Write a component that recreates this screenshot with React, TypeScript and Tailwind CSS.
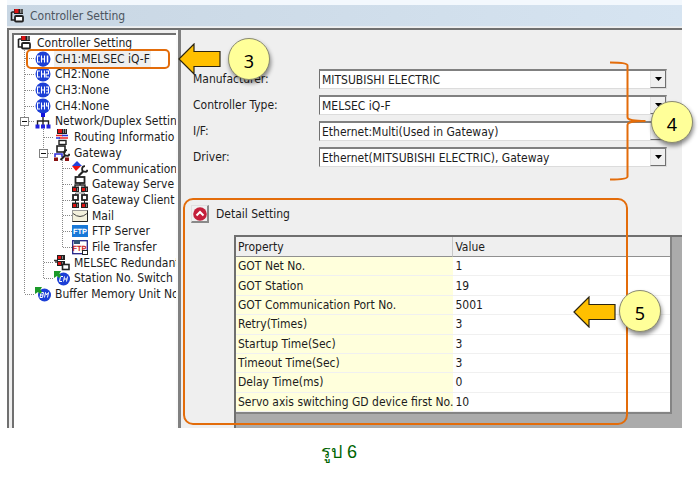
import React from 'react';

type IconKind =
  | 'root'
  | 'channel'
  | 'network'
  | 'routing'
  | 'gateway'
  | 'comm'
  | 'server'
  | 'client'
  | 'mail'
  | 'ftp'
  | 'file'
  | 'redundant'
  | 'badge';

interface TreeNode {
  label: string;
  icon: IconKind;
  depth: 0 | 1 | 2 | 3;
  mark?: string;
  selected?: boolean;
}

const nodes: TreeNode[] = [
  { label: 'Controller Setting', icon: 'root', depth: 0 },
  { label: 'CH1:MELSEC iQ-F', icon: 'channel', depth: 1, mark: 'CH1', selected: true },
  { label: 'CH2:None', icon: 'channel', depth: 1, mark: 'CH2' },
  { label: 'CH3:None', icon: 'channel', depth: 1, mark: 'CH3' },
  { label: 'CH4:None', icon: 'channel', depth: 1, mark: 'CH4' },
  { label: 'Network/Duplex Settin', icon: 'network', depth: 1 },
  { label: 'Routing Informatio', icon: 'routing', depth: 2 },
  { label: 'Gateway', icon: 'gateway', depth: 2 },
  { label: 'Communication', icon: 'comm', depth: 3 },
  { label: 'Gateway Serve', icon: 'server', depth: 3 },
  { label: 'Gateway Client', icon: 'client', depth: 3 },
  { label: 'Mail', icon: 'mail', depth: 3 },
  { label: 'FTP Server', icon: 'ftp', depth: 3 },
  { label: 'File Transfer', icon: 'file', depth: 3 },
  { label: 'MELSEC Redundant', icon: 'redundant', depth: 2 },
  { label: 'Station No. Switch', icon: 'badge', depth: 2, mark: 'CH' },
  { label: 'Buffer Memory Unit No', icon: 'badge', depth: 1, mark: 'BM' },
];

const fields = [
  { id: 'manufacturer', label: 'Manufacturer:', value: 'MITSUBISHI ELECTRIC' },
  { id: 'controller-type', label: 'Controller Type:', value: 'MELSEC iQ-F' },
  { id: 'interface', label: 'I/F:', value: 'Ethernet:Multi(Used in Gateway)' },
  { id: 'driver', label: 'Driver:', value: 'Ethernet(MITSUBISHI ELECTRIC), Gateway' },
];

const properties = [
  ['GOT Net No.', '1'],
  ['GOT Station', '19'],
  ['GOT Communication Port No.', '5001'],
  ['Retry(Times)', '3'],
  ['Startup Time(Sec)', '3'],
  ['Timeout Time(Sec)', '3'],
  ['Delay Time(ms)', '0'],
  ['Servo axis switching GD device first No.', '10'],
];

const indent = {
  0: 'pl-[3px]',
  1: 'pl-[21px]',
  2: 'pl-[40px]',
  3: 'pl-[58px]',
};

const Wrench = () => (
  <g fill="none" stroke="#222">
    <path d="M6.500 15L11 10.500" strokeWidth="2.200" />
    <path d="M13 5.200a2.800 2.800 0 1 0 2.600 3.600" strokeWidth="1.800" />
  </g>
);

const NodeIcon: React.FC<{ kind: IconKind; mark?: string }> = ({ kind, mark }) => (
  <svg viewBox="0 0 16 16" className="size-4 shrink-0" aria-hidden="true">
    {kind === 'root' && (
      <>
        <path d="M1.500 4v8h4M1.500 4h3" fill="none" stroke="#222" strokeWidth="1.600" />
        <rect x="4" y="1" width="9" height="5" fill="#222" />
        <rect x="4.500" y="1" width="4" height="4" fill="#d11" />
        <path d="M10.500 1v4M12 1v4" stroke="#888" />
        <rect x="5" y="8" width="8" height="5.500" rx="1" fill="#fff" stroke="#222" strokeWidth="1.800" />
      </>
    )}
    {kind === 'channel' && (
      <>
        <circle cx="8" cy="8" r="7.500" fill="#1c3fd6" />
        <g fill="none" stroke="#fff" strokeWidth="1.100">
          <path d="M5 5H2.500v6H5M6.500 4.500v7M9.500 4.500v7M6.500 8h3" />
          {mark === 'CH1' && <path d="M12.500 4.500v7" strokeWidth="1.500" />}
          {mark === 'CH2' && <path d="M11 5h2.500v3H11v3h3" />}
          {mark === 'CH3' && <path d="M11 5h2.500v6H11M11 8h2.500" />}
          {mark === 'CH4' && <path d="M11.500 4.500V8h2M13.500 4.500v7" />}
        </g>
      </>
    )}
    {kind === 'network' && (
      <>
        <path d="M8 4v8M2.500 12V8h11v4" fill="none" stroke="#222" strokeWidth="1.400" />
        <rect x="6" y="0" width="4" height="4" fill="#11d" />
        <path d="M.500 11.500h4v4h-4zM6 11.500h4v4H6zM11.500 11.500h4v4h-4z" fill="#22d" />
      </>
    )}
    {kind === 'routing' && (
      <>
        <rect x="3" y="0" width="10" height="5" fill="#222" />
        <rect x="4" y="0" width="4" height="4" fill="#d11" />
        <path d="M9.500 0v4M11.500 0v4" stroke="#888" />
        <path d="M2 6.500h7M5 9h9" stroke="#e22" strokeWidth="1.600" />
        <path d="M8 6.500h6M2 9h4" stroke="#23d" strokeWidth="1.600" />
        <rect x="5" y="11.500" width="7" height="4" fill="#fff" stroke="#222" strokeWidth="1.400" />
      </>
    )}
    {kind === 'gateway' && (
      <>
        <rect x="3" y="1" width="8" height="6" fill="#fff" stroke="#222" strokeWidth="1.600" />
        <path d="M1 12V9h7v3" fill="none" stroke="#33d" strokeWidth="1.600" />
        <path d="M0 12.500h4V16H0zM11 12.500h4V16h-4z" fill="#811" />
        <Wrench />
      </>
    )}
    {kind === 'comm' && (
      <>
        <path d="M5 0l5 5H0z" fill="#24d" />
        <path d="M0 5h9L4 10z" fill="#e11" />
        <Wrench />
      </>
    )}
    {kind === 'server' && (
      <>
        <rect x="3.500" y="1" width="9" height="6" fill="#fff" stroke="#222" strokeWidth="1.800" />
        <path d="M8 7v2M3 11V9h10v2" fill="none" stroke="#222" strokeWidth="1.400" />
        <path d="M0 10.500h7V16H0zM9 10.500h7V16H9z" fill="#222" />
        <path d="M1 12h3v3H1zM10 12h3v3h-3z" fill="#d11" />
        <path d="M5.500 12v3M14.500 12v3" stroke="#888" />
      </>
    )}
    {kind === 'client' && (
      <>
        <path d="M3.500 5V1h9v4" fill="none" stroke="#777" />
        <rect x="1" y="3" width="5" height="5" fill="#fff" stroke="#222" strokeWidth="1.800" />
        <rect x="10" y="3" width="5" height="5" fill="#fff" stroke="#222" strokeWidth="1.800" />
        <path d="M3.500 8v3M12.500 8v3" stroke="#222" />
        <path d="M0 10.500h7V16H0zM9 10.500h7V16H9z" fill="#222" />
        <path d="M1 12h3v3H1zM10 12h3v3h-3z" fill="#d11" />
        <path d="M5.500 12v3M14.500 12v3" stroke="#888" />
      </>
    )}
    {kind === 'mail' && (
      <>
        <rect x="0.500" y="2.500" width="15" height="11" fill="#f3f0dc" stroke="#999" />
        <path d="M15.500 2.500v11H.500" fill="none" stroke="#222" />
        <path d="M1 5.500q7 6 14 0" fill="none" stroke="#444" />
      </>
    )}
    {kind === 'ftp' && (
      <>
        <rect y="2" width="16" height="12" fill="#1878d8" />
        <text x="8" y="11" textAnchor="middle" textRendering="geometricPrecision" fontSize="7.500" fontWeight="700" fill="#fff" fontFamily="Liberation Sans, sans-serif">
          FTP
        </text>
      </>
    )}
    {kind === 'file' && (
      <>
        <rect x="0.700" y="1.700" width="14.600" height="13" fill="#fff" stroke="#228" strokeWidth="1.300" />
        <path d="M2 1h6v4H2z" fill="#357" />
        <text x="7.500" y="11.500" textAnchor="middle" textRendering="geometricPrecision" fontSize="7.500" fontWeight="700" fill="#c22" fontFamily="Liberation Sans, sans-serif">
          FTP
        </text>
        <rect x="10.500" y="11.500" width="5" height="4" fill="#fff" stroke="#222" />
      </>
    )}
    {kind === 'redundant' && (
      <>
        <path d="M0 5.500h4M2 5.500V8" stroke="#333" strokeWidth="1.400" />
        <path d="M3 0h8v5H3zM3 6h8v5H3z" fill="#222" />
        <path d="M4 1h3v3H4zM4 7h3v3H4z" fill="#d11" />
        <path d="M8.500 1v3M8.500 7v3" stroke="#888" />
        <rect x="8.500" y="9.500" width="6.500" height="5" fill="#fff" stroke="#222" strokeWidth="1.600" />
      </>
    )}
    {kind === 'badge' && (
      <>
        <circle cx="9.500" cy="9" r="6.500" fill="#1c3fd6" />
        <g fill="none" stroke="#fff">
          {mark === 'CH' && <path d="M9 6.500H6.500L5.500 11.500H8M10.500 6.500l-1 5M13.500 6.500l-1 5M10 9h3" />}
          {mark === 'BM' && <path d="M6 6.500h2.500L8 9H5.500M8 9l-.500 2.500H5L6 6.500M9.500 11.500l1-5L11.500 9l2-2.500-1 5" />}
        </g>
        <path d="M0 1h7L5.500 3.500 7 6 5 8 3 6 0 8z" fill="#1b9a2a" />
      </>
    )}
  </svg>
);

// dotted guide lines and +/- boxes that hang behind the tree rows
const TreeLines = () => (
  <svg className="pointer-events-none absolute left-0 top-0 h-[267px] w-[80px]" aria-hidden="true">
    <g stroke="#888" strokeDasharray="1 1" fill="none">
      <path d="M10.500 15v244M29.500 94v102M29.500 196v47M48.500 125v87" />
      <path d="M11 23.500h10M11 39.500h10M11 55.500h10M11 71.500h10M11 86.500h10M11 259.500h10" />
      <path d="M30 102.500h10M30 118.500h10M30 227.500h10M30 243.500h10" />
      <path d="M49 133.500h10M49 149.500h10M49 165.500h10M49 180.500h10M49 196.500h10M49 212.500h10" />
    </g>
    <g fill="#fff" stroke="#808080">
      <rect x="6.500" y="82.500" width="8" height="8" />
      <rect x="25.500" y="114.500" width="8" height="8" />
    </g>
    <path d="M8 86.500h5M27 118.500h5" stroke="#111" />
  </svg>
);

const Tree = () => (
  <div className="relative min-h-0 flex-1 overflow-hidden border-2 border-r-0 border-b-0 border-t-[#707070] border-l-[#707070] bg-white">
    <TreeLines />
    <ul className="relative grid h-[267px] grid-rows-[repeat(17,minmax(0,1fr))]">
      {nodes.map((node) => (
        <li key={node.label} className={`flex items-center whitespace-nowrap ${indent[node.depth]}`}>
          <NodeIcon kind={node.icon} mark={node.mark} />
          <span className={node.selected ? 'ml-[3px] bg-[#efefef] px-px leading-4' : 'ml-[3px] px-px leading-4'}>
            {node.label}
          </span>
        </li>
      ))}
    </ul>
  </div>
);

const SelectField: React.FC<{ id: string; label: string; value: string }> = ({ id, label, value }) => (
  <>
    <label htmlFor={id}>{label}</label>
    <div className="relative">
      <select
        id={id}
        defaultValue={value}
        className="block h-5 w-full appearance-none rounded-none border border-t-2 border-t-[#808080] border-l-[#707070] border-r-[#dcdcdc] border-b-[#dcdcdc] bg-white pl-0.5 pr-5 leading-4"
      >
        <option>{value}</option>
      </select>
      <span className="pointer-events-none absolute bottom-px right-px top-0.5 flex w-4 items-center justify-center border-r border-b border-l border-l-[#e4e4e4] border-r-[#707070] border-b-[#707070] bg-[#f0f0f0]">
        <svg viewBox="0 0 7 4" className="h-1 w-[7px]" aria-hidden="true">
          <path d="M0 0h7L3.500 4z" fill="#000" />
        </svg>
      </span>
    </div>
  </>
);

const PropertyTable = () => (
  <div className="mt-3 ml-[42px] flex-1 border-t-2 border-l-2 border-[#6f6f6f] bg-[#ababab] pr-2.5">
    <table className="h-[177px] w-full border-separate border-spacing-0 border-r-2 border-b-2 border-[#848484] bg-white text-left leading-4">
      <thead>
        <tr className="bg-[#efefef]">
          <th className="h-5 w-1/2 border-r border-b border-[#909090] border-r-[#c8c8c8] pl-0.5 font-normal">Property</th>
          <th className="border-b border-[#909090] pl-0.5 font-normal">Value</th>
        </tr>
      </thead>
      <tbody>
        {properties.map(([name, value]) => (
          <tr key={name}>
            <td className="whitespace-nowrap border-b border-[#f0f0f0] bg-[#ffffdc] pl-0.5">{name}</td>
            <td className="border-b border-[#f0f0f0] pl-0.5">{value}</td>
          </tr>
        ))}
      </tbody>
    </table>
  </div>
);

const Callout: React.FC<{ n: number; className: string }> = ({ n, className }) => (
  <span
    className={`absolute flex size-[42px] items-center justify-center rounded-full border border-[#8a8a70] bg-[#ffff99] pt-1 font-['Noto_Sans',sans-serif] text-lg leading-5 text-black shadow-[1px_3px_4px_rgba(0,0,0,0.45)] ${className}`}
  >
    {n}
  </span>
);

const Arrow: React.FC<{ className: string }> = ({ className }) => (
  <svg viewBox="0 0 43 32" className={`absolute h-8 w-[43px] ${className}`} aria-hidden="true">
    <path d="M1 16L16 1v7.500h26v15H16V31z" fill="#ffc000" stroke="#2b2410" strokeWidth="1.200" />
  </svg>
);

const Annotations = () => (
  <div className="pointer-events-none absolute inset-0">
    <div className="absolute left-[19px] top-[49px] h-5 w-[144px] rounded-[5px] border-2 border-[#e36c0a]" />
    <div className="absolute bottom-[3px] left-[176px] right-[54px] top-[198px] rounded-[10px] border-2 border-[#e36c0a]" />
    <svg viewBox="0 0 38 120" className="absolute right-[35px] top-[61px] h-[120px] w-[38px]" aria-hidden="true">
      <path
        d="M1 1.500c10 0 17.500.500 17.500 3V56c0 3 5 4 18 4-13 0-18 1-18 4v51.500c0 2.500-7.500 3-17.500 3"
        fill="none"
        stroke="#e36c0a"
        strokeWidth="2"
      />
    </svg>
    <Arrow className="left-[171px] top-[43px]" />
    <Callout n={3} className="left-[221px] top-[38px]" />
    <Callout n={4} className="right-[-11px] top-[101px]" />
    <Arrow className="right-[66px] top-[296px]" />
    <Callout n={5} className="right-[21px] top-[290px]" />
  </div>
);

export default function App() {
  return (
    <main className="bg-white font-['DejaVu_Sans_Condensed','DejaVu_Sans',sans-serif] text-xs text-[#1c1c1c]">
      <section className="relative ml-[7px] mr-[18px] flex h-[428px] flex-col bg-[#efefef]">
        <header className="flex h-[27px] shrink-0 items-center gap-1 border-t-[5px] border-b border-t-[#f3f8fd] border-b-[#e8ecf0] bg-linear-to-r from-[#c8d6e3] to-[#d6e4f1] pl-[3px] text-[#4c5560]">
          <NodeIcon kind="root" />
          <h1>Controller Setting</h1>
        </header>
        <div className="mt-px flex min-h-0 flex-1 border-t-2 border-l-2 border-[#707070]">
          <nav className="flex w-[169px] shrink-0 flex-col border-r-2 border-[#fafafa] pl-[3px] pt-[3px]">
            <Tree />
          </nav>
          <div className="flex min-w-0 flex-1 flex-col border-l-[3px] border-[#808080]">
            <div className="mt-[39px] ml-3 mr-[15px] grid grid-cols-[126px_minmax(0,1fr)] items-center gap-y-1.5">
              {fields.map((field) => (
                <SelectField key={field.id} {...field} />
              ))}
            </div>
            <div className="ml-2.5 mt-[38px] flex items-center gap-[7px]">
              <button
                type="button"
                aria-label="Collapse detail setting"
                className="flex size-[18px] items-center justify-center border border-b-2 border-r-2 border-[#e0e0e0] border-b-[#8a8a8a] border-r-[#8a8a8a] bg-[#f0f0f0]"
              >
                <svg viewBox="0 0 14 14" className="size-3.5" aria-hidden="true">
                  <circle cx="7" cy="7" r="6.800" fill="#c41f3a" />
                  <path d="M3.500 8.500L7 5l3.500 3.500" fill="none" stroke="#fff" strokeWidth="2" />
                </svg>
              </button>
              <h2>Detail Setting</h2>
            </div>
            <div className="flex min-h-0 flex-1 flex-col pl-[11px]">
              <PropertyTable />
            </div>
          </div>
        </div>
        <Annotations />
      </section>
      <p className="mr-[22px] mt-3 text-center font-['Liberation_Sans',sans-serif] text-lg leading-6 text-[#006400]">
        รูป 6
      </p>
    </main>
  );
}
